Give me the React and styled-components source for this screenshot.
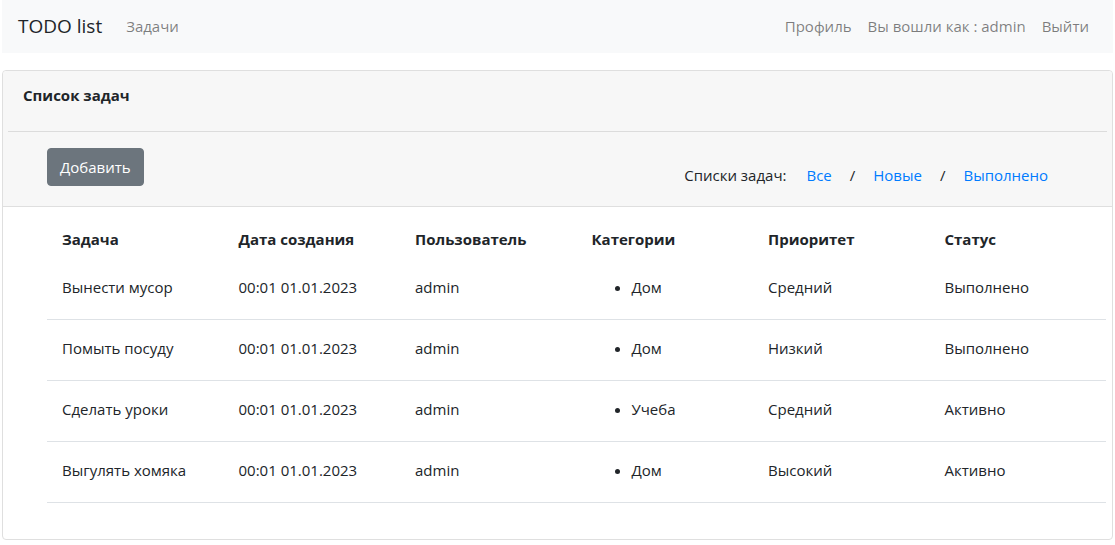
import React from "react";
import styled, { createGlobalStyle } from "styled-components";

const GlobalStyle = createGlobalStyle`
  body {
    margin: 0;
    font-family: "Open Sans", "Noto Sans", sans-serif;
    font-size: 15px;
    line-height: 1.5;
    color: #212529;
    background: #fff;
  }
`;

const Page = styled.div`
  padding: 0 2px;
`;

const Navbar = styled.nav`
  display: flex;
  align-items: center;
  height: 53px;
  padding: 0 16px;
  background-color: #f8f9fa;
`;

const Brand = styled.span`
  font-size: 19px;
  color: #212529;
  margin-right: 16px;
`;

const NavList = styled.div`
  display: flex;
  align-items: center;
  margin-left: ${(p) => (p.$right ? "auto" : "0")};
`;

const NavLink = styled.a`
  padding: 0 8px;
  color: rgba(0, 0, 0, 0.5);
  text-decoration: none;
`;

const Card = styled.section`
  margin-top: 17px;
  border: 1px solid #dfdfdf;
  border-radius: 4px;
  height: 470px;
  box-sizing: border-box;
`;

const CardHeader = styled.header`
  background-color: #f7f7f7;
  border-bottom: 1px solid #dfdfdf;
  border-radius: 4px 4px 0 0;
  padding: 12px 0 20px;
`;

const Title = styled.h6`
  margin: 0 0 24px 20px;
  font-size: 15px;
  font-weight: 700;
  line-height: 24px;
`;

const Rule = styled.hr`
  margin: 0 5px 16px;
  border: 0;
  border-top: 1px solid #dcdcdc;
`;

const Toolbar = styled.div`
  display: flex;
  justify-content: space-between;
  align-items: flex-end;
  padding: 0 64px 0 44px;
`;

const Button = styled.button`
  height: 38px;
  padding: 0 12px;
  font-family: inherit;
  font-size: 15px;
  color: #fff;
  background-color: #6c757d;
  border: 1px solid #6c757d;
  border-radius: 4px;
`;

const Filters = styled.div`
  display: flex;
  align-items: center;
  line-height: 24px;
  margin-bottom: -1px;
`;

const FilterLabel = styled.span`
  margin-right: 20px;
`;

const FilterLink = styled.a`
  color: #007bff;
  text-decoration: none;
`;

const Slash = styled.span`
  margin: 0 18px;
`;

const CardBody = styled.div`
  padding: 14px 6px 0 44px;
`;

const Table = styled.table`
  width: 100%;
  table-layout: fixed;
  border-collapse: collapse;
`;

const Th = styled.th`
  height: 37px;
  padding: 0 15px 1px;
  box-sizing: border-box;
  text-align: left;
  font-weight: 700;
`;

const Td = styled.td`
  height: 61px;
  padding: 0 15px 2px;
  box-sizing: border-box;
  border-bottom: 1px solid #dee2e6;
  vertical-align: middle;
`;

const Categories = styled.ul`
  margin: 0;
  padding-left: 40px;
`;

const columns = ["Задача", "Дата создания", "Пользователь", "Категории", "Приоритет", "Статус"];

const tasks = [
  { id: 1, title: "Вынести мусор", category: "Дом", priority: "Средний", status: "Выполнено" },
  { id: 2, title: "Помыть посуду", category: "Дом", priority: "Низкий", status: "Выполнено" },
  { id: 3, title: "Сделать уроки", category: "Учеба", priority: "Средний", status: "Активно" },
  { id: 4, title: "Выгулять хомяка", category: "Дом", priority: "Высокий", status: "Активно" },
];

const App = () => (
  <Page>
    <GlobalStyle />
    <Navbar>
      <Brand>TODO list</Brand>
      <NavList>
        <NavLink href="#">Задачи</NavLink>
      </NavList>
      <NavList $right>
        <NavLink href="#">Профиль</NavLink>
        <NavLink href="#">Вы вошли как : admin</NavLink>
        <NavLink href="#">Выйти</NavLink>
      </NavList>
    </Navbar>
    <Card>
      <CardHeader>
        <Title>Список задач</Title>
        <Rule />
        <Toolbar>
          <Button>Добавить</Button>
          <Filters>
            <FilterLabel>Списки задач:</FilterLabel>
            <FilterLink href="#">Все</FilterLink>
            <Slash>/</Slash>
            <FilterLink href="#">Новые</FilterLink>
            <Slash>/</Slash>
            <FilterLink href="#">Выполнено</FilterLink>
          </Filters>
        </Toolbar>
      </CardHeader>
      <CardBody>
        <Table>
          <thead>
            <tr>
              {columns.map((c) => (
                <Th key={c}>{c}</Th>
              ))}
            </tr>
          </thead>
          <tbody>
            {tasks.map((t) => (
              <tr key={t.id}>
                <Td>{t.title}</Td>
                <Td>00:01 01.01.2023</Td>
                <Td>admin</Td>
                <Td>
                  <Categories>
                    <li>{t.category}</li>
                  </Categories>
                </Td>
                <Td>{t.priority}</Td>
                <Td>{t.status}</Td>
              </tr>
            ))}
          </tbody>
        </Table>
      </CardBody>
    </Card>
  </Page>
);

export default App;
